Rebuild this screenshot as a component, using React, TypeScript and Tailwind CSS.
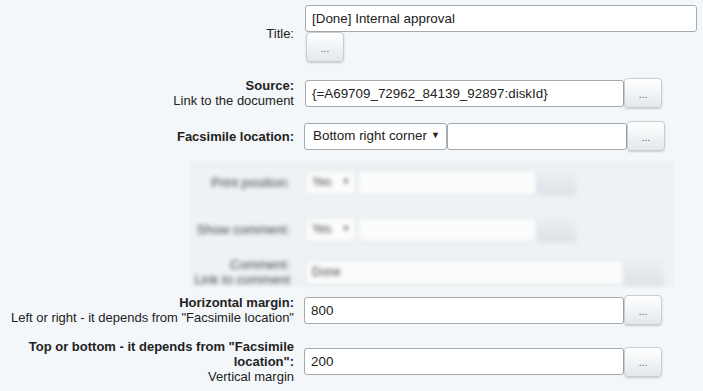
import React from 'react';

function DotsButton({ className = '' }: { className?: string }) {
  return (
    <button
      type="button"
      className={`flex h-[30px] w-[38px] shrink-0 items-center justify-center rounded-[4px] border border-[#c6cdd3] bg-gradient-to-b from-white to-[#e3e8ec] pt-[3px] text-[10px] leading-none text-[#555] shadow-[0_1px_2px_rgba(0,0,0,0.18)] ${className}`}
    >
      ...
    </button>
  );
}

function TextBox({ value, width }: { value: string; width: string }) {
  return (
    <input
      type="text"
      readOnly
      value={value}
      className={`h-[27px] ${width} shrink-0 rounded-[3px] border border-[#a3aab0] bg-white px-[6px] text-[13.4px] text-[#222] outline-none`}
    />
  );
}

function Label({ title, sub, bold = true }: { title: string; sub?: string; bold?: boolean }) {
  return (
    <div className="ml-[8px] w-[286px] shrink-0 text-right text-[13px] leading-[15px]">
      <div className={bold ? 'font-bold' : ''}>{title}</div>
      {sub && <div>{sub}</div>}
    </div>
  );
}

function BlurRow({ label, sub, select, value, wide, className = '' }: { label: string; sub?: string; select?: boolean; value?: string; wide?: boolean; className?: string }) {
  return (
    <div className={`flex items-center ${className}`}>
      <div className="w-[100px] shrink-0 whitespace-nowrap text-right text-[13px] leading-[15px]">
        <div>{label}</div>
        {sub && <div>{sub}</div>}
      </div>
      <div className="ml-[15px] flex items-center">
        {select && (
          <div className="flex h-[25px] w-[52px] items-center justify-between rounded-[3px] border border-[#d3d8dc] bg-white px-[6px] text-[12px]">
            <span>Yes</span>
            <span className="text-[8px]">▼</span>
          </div>
        )}
        <div
          className={`flex h-[25px] items-center rounded-[3px] border border-[#d3d8dc] bg-white px-[6px] text-[12px] ${wide ? 'w-[319px]' : 'w-[180px]'}`}
        >
          {value}
        </div>
        <div className="h-[28px] w-[40px] rounded-[4px] bg-gradient-to-b from-[#eef1f4] to-[#d9dfe4]" />
      </div>
    </div>
  );
}

export default function App() {
  return (
    <div className="h-[391px] w-[703px] overflow-hidden bg-[#f4f7f9] font-['Liberation_Sans',Arial,sans-serif] text-[12px] text-[#222]">
      <div className="pt-[5px]">
        {/* Title */}
        <div className="flex items-center">
          <Label title="Title:" bold={false} />
          <div className="ml-[11px] flex w-[392px] flex-col items-start">
            <TextBox value="[Done] Internal approval" width="w-[392px]" />
            <DotsButton className="ml-[1px]" />
          </div>
        </div>

        {/* Source */}
        <div className="mt-[16px] flex items-center">
          <Label title="Source:" sub="Link to the document" />
          <div className="ml-[11px] flex items-center">
            <TextBox value="{=A69709_72962_84139_92897:diskId}" width="w-[319px]" />
            <DotsButton className="w-[37px]" />
          </div>
        </div>

        {/* Facsimile location */}
        <div className="mt-[13px] flex items-center">
          <Label title="Facsimile location:" />
          <div className="ml-[10px] flex items-center">
            <div className="flex h-[27px] w-[143px] items-center justify-between rounded-[3px] border border-[#a3aab0] bg-white pl-[8px] pr-[6px] text-[13.4px]">
              <span>Bottom right corner</span>
              <span className="text-[9px]">▼</span>
            </div>
            <TextBox value="" width="w-[180px]" />
            <DotsButton className="w-[37px]" />
          </div>
        </div>

        {/* hidden options, blurred */}
        <div className="ml-[190px] mt-[10px] h-[126px] w-[485px] bg-[#eef2f4]">
          <div className="flex flex-col pt-[7px] text-[#111] opacity-80 blur-[2px]">
            <BlurRow label="Print position:" select />
            <BlurRow label="Show comment:" select className="mt-[19px]" />
            <BlurRow label="Comment:" sub="Link to comment" value="Done" wide className="mt-[14px]" />
          </div>
        </div>

        {/* Horizontal margin */}
        <div className="mt-[8px] flex items-center">
          <Label title="Horizontal margin:" sub={'Left or right - it depends from "Facsimile location"'} />
          <div className="ml-[10px] flex items-center">
            <TextBox value="800" width="w-[320px]" />
            <DotsButton className="w-[37px]" />
          </div>
        </div>

        {/* Vertical margin */}
        <div className="mt-[14px] flex items-center">
          <Label title={'Top or bottom - it depends from "Facsimile location":'} sub="Vertical margin" />
          <div className="ml-[10px] flex items-center">
            <TextBox value="200" width="w-[320px]" />
            <DotsButton className="w-[37px]" />
          </div>
        </div>
      </div>
    </div>
  );
}
